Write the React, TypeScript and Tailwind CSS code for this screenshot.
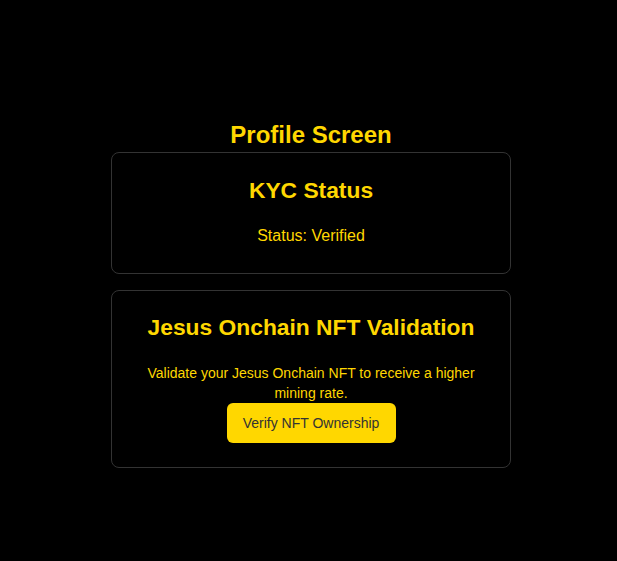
export default function App() {
  return (
    <div
      className="min-h-[561px] w-full bg-black pl-[5px] pt-[121px]"
      style={{ fontFamily: '"Liberation Sans", Arial, sans-serif' }}
    >
      <div className="mx-auto flex w-[400px] flex-col items-stretch">
        <h2 className="text-center text-[24px] font-bold leading-[28px] text-[#FFD700]">
          Profile Screen
        </h2>

        <section className="mt-[3px] rounded-lg border border-[#333] px-5 pb-[25px] pt-[23px] text-center">
          <h3 className="text-[22.8px] font-bold leading-[28px] text-[#FFD700]">
            KYC Status
          </h3>
          <p className="mt-5 text-base leading-6 text-[#FFD700]">
            Status: Verified
          </p>
        </section>

        <section className="mt-4 flex flex-col items-center rounded-lg border border-[#333] px-5 pb-6 pt-[22px] text-center">
          <h3 className="text-[22.8px] font-bold leading-[28px] text-[#FFD700]">
            Jesus Onchain NFT Validation
          </h3>
          <p className="mt-[22px] text-sm leading-5 text-[#FFD700]">
            Validate your Jesus Onchain NFT to receive a higher mining rate.
          </p>
          <button className="flex h-10 w-[169px] items-center justify-center rounded-md bg-[#FFD700] text-sm leading-5 text-[#333]">
            Verify NFT Ownership
          </button>
        </section>
      </div>
    </div>
  );
}
